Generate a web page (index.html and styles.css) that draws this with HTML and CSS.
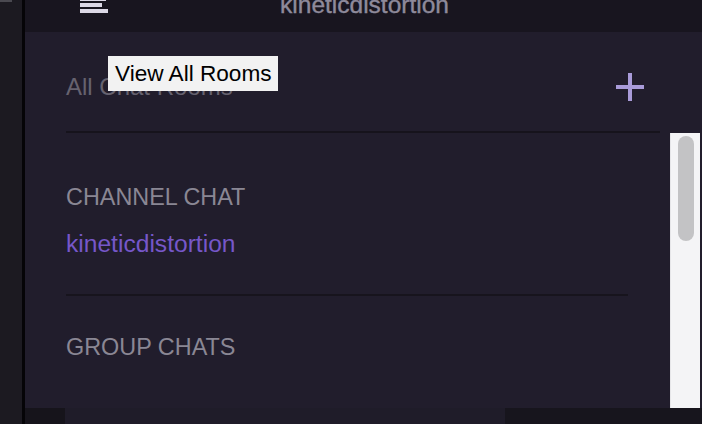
FILE: index.html
```html
<!DOCTYPE html>
<html>
<head>
<meta charset="utf-8">
<link rel="stylesheet" href="styles.css">
</head>
<body>
<div class="app">
  <div class="side"><div class="side-tab"></div></div>
  <div class="rule"></div>
  <div class="main">
    <header class="topbar">
      <div class="burger"><span class="b1"></span><span class="b2"></span><span class="b3"></span></div>
      <div class="title">kineticdistortion</div>
    </header>
    <section class="panel">
      <div class="rooms-head">
        <div class="rooms-title">All Chat Rooms</div>
        <svg class="plus" width="28" height="28" viewBox="0 0 28 28"><path d="M14 0v28M0 14h28" stroke="#a99bd9" stroke-width="4" fill="none"/></svg>
      </div>
      <div class="divider"></div>
      <div class="scroller">
        <div class="list">
          <div class="section-title">CHANNEL CHAT</div>
          <div class="channel">kineticdistortion</div>
          <div class="divider2"></div>
          <div class="section-title group">GROUP CHATS</div>
        </div>
        <div class="scrollbar"><div class="thumb"></div></div>
      </div>
    </section>
    <footer class="foot">
      <div class="f1"></div><div class="f2"></div><div class="f3"></div>
    </footer>
    <div class="tooltip">View All Rooms</div>
  </div>
</div>
</body>
</html>
```
FILE: styles.css
```css
* { box-sizing: border-box; }
html, body { margin: 0; padding: 0; }
body {
  width: 702px; height: 424px; overflow: hidden;
  font-family: "Liberation Sans", Arial, sans-serif;
  background: #211d2c;
}
.app { display: flex; height: 424px; }
.side { width: 22px; background: #1c1a21; }
.side-tab { width: 12px; height: 2px; background: #4a4950; }
.rule { width: 3px; background: #050407; }
.main { flex: 1; display: flex; flex-direction: column; position: relative; }
.topbar {
  height: 32px; background: #18151f; position: relative;
  display: flex; justify-content: center; overflow: hidden;
}
.burger {
  position: absolute; left: 55px; top: -3px;
  display: flex; flex-direction: column; gap: 2px;
}
.burger span { display: block; height: 4px; background: #dcd8e6; }
.b1 { width: 26px; }
.b2 { width: 22px; }
.b3 { width: 28px; }
.title {
  font-size: 24.5px; line-height: 28px; color: #8e8a9b;
  margin-top: -9px; margin-left: 2px;
  -webkit-text-stroke: 0.4px #8e8a9b;
}
.panel { height: 376px; background: #211d2c; display: flex; flex-direction: column; }
.rooms-head {
  height: 99px; padding: 10px 58px 0 41px;
  display: flex; align-items: center; justify-content: space-between;
}
.rooms-title { font-size: 24px; line-height: 28px; color: #66626f; }
.plus { display: block; }
.divider { height: 2px; margin-left: 41px; width: 594px; background: #16131c; }
.scroller { height: 275px; display: flex; padding-right: 2px; }
.list { flex: 1; padding: 50px 42px 0 41px; }
.section-title { font-size: 23.4px; line-height: 28px; color: #8a8794; }
.channel { font-size: 24.6px; line-height: 28px; color: #7657c9; margin-top: 19px; }
.divider2 { height: 2px; background: #17141d; margin-top: 36px; }
.group { margin-top: 37px; }
.scrollbar {
  width: 30px; background: #f4f4f6; border-left: 1px solid #e6e6e9;
  padding: 3px 0 0 7px;
}
.thumb { width: 16px; height: 105px; border-radius: 8px; background: #c3c3c5; }
.foot { height: 16px; display: flex; }
.f1 { width: 40px; background: #16141b; }
.f2 { width: 440px; background: #1f1c29; }
.f3 { flex: 1; background: #17151d; }
.tooltip {
  position: absolute; left: 83px; top: 56px;
  width: 170px; height: 35px; padding-left: 7px;
  background: #f2f2f2; color: #000;
  font-size: 22.6px; line-height: 35px; white-space: nowrap;
}
```
